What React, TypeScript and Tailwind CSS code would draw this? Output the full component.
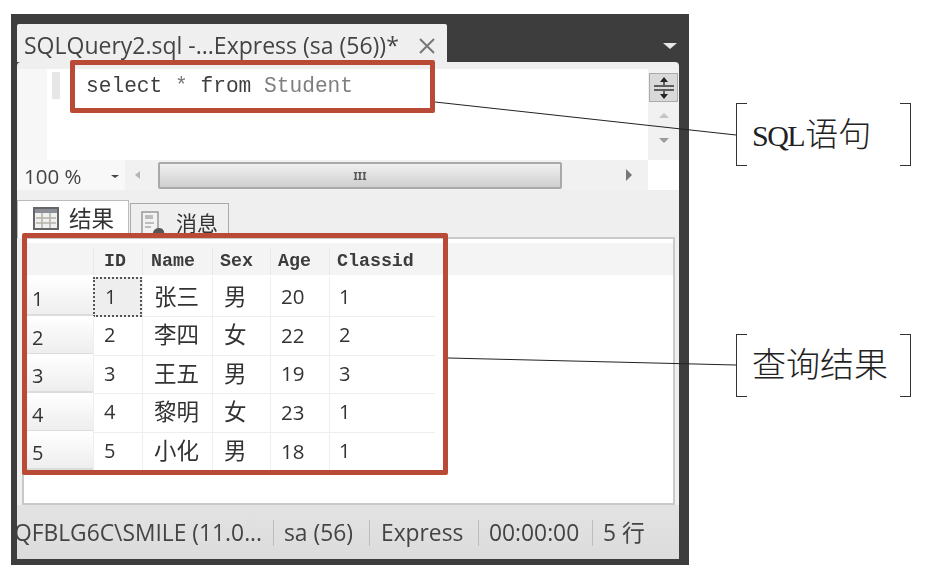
const columns = "grid grid-cols-[66px_49px_70px_58px_59px_106px]";
const mono = "font-['Liberation_Mono','Noto_Sans_CJK_SC',monospace]";
const ui = "font-['Open_Sans','Noto_Sans_CJK_SC',sans-serif]";
const rows = [
  ["1", "1", "张三", "男", "20", "1"],
  ["2", "2", "李四", "女", "22", "2"],
  ["3", "3", "王五", "男", "19", "3"],
  ["4", "4", "黎明", "女", "23", "1"],
  ["5", "5", "小化", "男", "18", "1"],
];

function TableIcon() {
  return (
    <svg width="26" height="24" viewBox="0 0 26 24">
      <rect x="1" y="1" width="24" height="21" fill="#eef0f2" stroke="#666" strokeWidth="2" />
      <rect x="2" y="2" width="22" height="4" fill="#8b8f96" />
      <path d="M3 11h20M3 16h20M9 6v15M17 6v15" stroke="#b5b0a4" strokeWidth="1.5" fill="none" />
    </svg>
  );
}

function MessageIcon() {
  return (
    <svg width="28" height="26" viewBox="0 0 28 26">
      <rect x="2" y="1" width="16" height="23" fill="#f2f2f2" stroke="#999" strokeWidth="1.5" />
      <rect x="5" y="4" width="8" height="4" fill="#bbb" />
      <path d="M5 12h9M5 16h6" stroke="#aaa" strokeWidth="1.5" />
      <path d="M13 25c-1-5 2-8 6-8s6 3 5 8z" fill="#555" />
    </svg>
  );
}

function Bracket({ children }: { children: React.ReactNode }) {
  return (
    <div className="relative flex h-[63px] w-[175px] items-center pl-4">
      <div className="absolute left-0 top-0 h-full w-[11px] border-y border-l border-[#333]" />
      <div className="absolute right-0 top-0 h-full w-[11px] border-y border-r border-[#333]" />
      <span className="font-['Liberation_Serif','Noto_Sans_CJK_SC',serif] text-[34px] font-light leading-none text-[#222]">
        {children}
      </span>
    </div>
  );
}

export default function App() {
  return (
    <div className="relative flex h-[581px] w-[925px] items-start overflow-hidden bg-white pl-[11px] pt-[14px]">
      <div className="flex h-[551px] w-[678px] flex-col overflow-hidden bg-[#3d3d3d] pb-[6px] pl-[6px] pr-[10px] blur-[0.5px]">
        <div className="flex h-[48px] shrink-0 items-end justify-between">
          <div className={`flex h-[38px] w-[430px] items-center justify-between rounded-t-[2px] bg-[#efefef] pl-[7px] pr-[11px] pt-[5px] text-[23px] text-[#444] ${ui}`}>
            <span className="whitespace-nowrap">SQLQuery2.sql -...Express (sa (56))*</span>
            <svg width="18" height="18" viewBox="0 0 18 18">
              <path d="M2 2l14 14M16 2L2 16" stroke="#777" strokeWidth="2" />
            </svg>
          </div>
          <div className="mb-[13px] mr-[2px] h-0 w-0 border-x-[7px] border-t-[6px] border-x-transparent border-t-[#e8e8e8]" />
        </div>

        <div className="flex min-h-0 flex-1 flex-col rounded-sm bg-[#efefef]">
          <div className="flex h-[98px] shrink-0 pt-[7px]">
            <div className="flex w-[30px] shrink-0 bg-[#f7f7f7]" />
            <div className="flex min-w-0 flex-1 bg-white">
              <div className="ml-[5px] mt-[3px] h-[27px] w-[8px] bg-[#e6e6e6]" />
              <div className={`ml-[26px] pt-[5px] text-[21.2px] leading-[24px] text-[#3f3f3f] ${mono}`}>
                <span>select </span>
                <span className="text-[#777]">*</span>
                <span> from </span>
                <span className="text-[#7f7f7f]">Student</span>
              </div>
            </div>
            <div className="flex w-[31px] shrink-0 flex-col items-center bg-[#f1f1f1]">
              <div className="mt-[4px] flex h-[29px] w-[29px] items-center justify-center border border-[#aaa] bg-[#d9d9d9]">
                <svg width="22" height="24" viewBox="0 0 22 24">
                  <path d="M11 1l-4 5h8zM11 23l-4-5h8z" fill="#222" />
                  <path d="M1 10h20M1 14h20M11 5v4M11 15v4" stroke="#333" strokeWidth="1.5" />
                </svg>
              </div>
              <div className="mt-[11px] h-0 w-0 border-x-[5px] border-b-[5px] border-x-transparent border-b-[#c4c4c4]" />
              <div className="mt-[20px] h-0 w-0 border-x-[5px] border-t-[5px] border-x-transparent border-t-[#9a9a9a]" />
            </div>
          </div>

          <div className="flex h-[30px] shrink-0 items-center">
            <div className={`flex h-full w-[108px] shrink-0 items-center justify-between bg-[#f8f8f8] pl-[7px] pr-[6px] pt-[3px] text-[20.5px] text-[#444] ${ui}`}>
              <span>100 %</span>
              <div className="h-0 w-0 border-x-[4px] border-t-[3px] border-x-transparent border-t-[#444]" />
            </div>
            <div className="flex h-full flex-1 items-center bg-[#f1f1f1]">
              <div className="ml-[10px] h-0 w-0 border-y-[4px] border-r-[5px] border-y-transparent border-r-[#b5b5b5]" />
              <div className="ml-[18px] flex h-[27px] w-[404px] items-center justify-center rounded-[2px] border-2 border-[#a9a9a9] bg-gradient-to-b from-[#f0f0f0] to-[#cfcfcf] text-[11px] font-bold leading-none text-[#555]">
                III
              </div>
              <div className="ml-[64px] h-0 w-0 border-y-[6px] border-l-[6px] border-y-transparent border-l-[#777]" />
            </div>
            <div className="h-full w-[31px] shrink-0 bg-white" />
          </div>

          <div className="flex h-[47px] shrink-0 items-end gap-[1px] pl-0">
            <div className={`mb-[-1px] flex h-[38px] w-[112px] items-center gap-[10px] border border-b-0 border-[#bbb] bg-white pb-[2px] pl-[15px] text-[22.5px] text-[#333] ${ui}`}>
              <TableIcon />
              <span>结果</span>
            </div>
            <div className={`flex h-[34px] w-[99px] items-center gap-[8px] overflow-hidden border border-b-0 border-[#aaa] bg-[#efefef] pl-[9px] pt-[6px] text-[21px] text-[#333] ${ui}`}>
              <MessageIcon />
              <span>消息</span>
            </div>
          </div>

          <div className="ml-[5px] mr-[4px] h-[268px] shrink-0 border-2 border-[#c9c9c9] bg-white pl-[3px] pt-[4px]">
            <div className={`${columns} h-[32px] items-center bg-[#f4f4f4] pt-[5px] text-[18.3px] font-bold text-[#3c3c3c] ${mono}`}>
              <span />
              <span className="border-l border-[#e8e8e8] pl-[10px]">ID</span>
              <span className="border-l border-[#e8e8e8] pl-[8px]">Name</span>
              <span className="border-l border-[#e8e8e8] pl-[7px]">Sex</span>
              <span className="border-l border-[#e8e8e8] pl-[7px]">Age</span>
              <span className="border-l border-[#e8e8e8] pl-[7px]">Classid</span>
            </div>
            <div className="h-[2px]" />
            {rows.map((r, i) => (
              <div key={i} className={`${columns} h-[38.6px] text-[21px] text-[#333] ${ui}`}>
                <div className="flex items-center border-b-[3px] border-[#dcdcdc] bg-gradient-to-b from-white to-[#eeeeee] pl-[5px] pt-[7px] text-[20px]">{r[0]}</div>
                <div className={`flex items-center pl-[10px] text-[20px] ${i === 0 ? "border-2 border-dotted border-[#555] bg-[#eeeeee] pl-[8px]" : "border-b border-l border-[#eeeeee]"}`}>{r[1]}</div>
                <div className="flex items-center border-b border-l border-[#eeeeee] pl-[11px] text-[22.5px]">{r[2]}</div>
                <div className="flex items-center border-b border-l border-[#eeeeee] pl-[11px] text-[22.5px]">{r[3]}</div>
                <div className="flex items-center border-b border-l border-[#eeeeee] pl-[10px] text-[20.5px]">{r[4]}</div>
                <div className="flex items-center border-b border-l border-[#eeeeee] pl-[9px] text-[20px]">{r[5]}</div>
              </div>
            ))}
          </div>

          <div className={`flex min-h-0 flex-1 items-center overflow-hidden bg-gradient-to-b from-[#e3e3e3] to-[#dcdcdc] pt-[2px] text-[22.8px] text-[#444] ${ui}`}>
            <span className="ml-[-3px] w-[259px] shrink-0 whitespace-nowrap">QFBLG6C\SMILE (11.0...</span>
            <span className="h-[26px] w-px shrink-0 bg-[#bdbdbd]" />
            <span className="w-[95px] shrink-0 pl-[10px]">sa (56)</span>
            <span className="h-[26px] w-px shrink-0 bg-[#bdbdbd]" />
            <span className="w-[108px] shrink-0 pl-[11px]">Express</span>
            <span className="h-[26px] w-px shrink-0 bg-[#bdbdbd]" />
            <span className="w-[113px] shrink-0 pl-[10px]">00:00:00</span>
            <span className="h-[26px] w-px shrink-0 bg-[#bdbdbd]" />
            <span className="pl-[10px]">5 行</span>
          </div>
        </div>
      </div>

      <div className="ml-[47px] flex flex-col gap-[168px] pt-[89px]">
        <Bracket>
          <span className="text-[30px] tracking-[-1.5px]">SQL</span>
          <span className="ml-[1px] text-[33px]">语句</span>
        </Bracket>
        <Bracket>查询结果</Bracket>
      </div>

      <div className="pointer-events-none absolute left-[70px] top-[60px] h-[53px] w-[365px] rounded-[2px] border-[5px] border-[#b94a35]" />
      <div className="pointer-events-none absolute left-[22px] top-[233px] h-[242px] w-[426px] rounded-[2px] border-[5px] border-[#b94a35]" />
      <svg className="pointer-events-none absolute left-0 top-0" width="925" height="581">
        <path d="M435 102L736 135M448 358L736 365" stroke="#222" strokeWidth="1" fill="none" />
      </svg>
    </div>
  );
}
